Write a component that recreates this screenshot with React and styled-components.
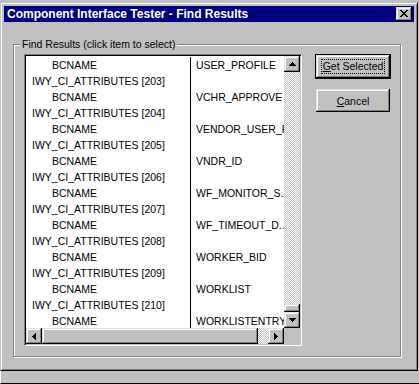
import React from "react";
import styled, { createGlobalStyle } from "styled-components";

const GlobalStyle = createGlobalStyle`
  html, body {
    margin: 0;
    padding: 0;
    background: #c0c0c0;
  }
  body {
    font-family: "Liberation Sans", Arial, sans-serif;
    font-size: 10.5px;
    color: #000;
  }
`;

const raised = `
  box-shadow: inset -1px -1px 0 #000, inset 1px 1px 0 #dfdfdf,
    inset -2px -2px 0 #808080, inset 2px 2px 0 #fff;
`;

const dither = `
  background-color: #c0c0c0;
  background-image: conic-gradient(#c0c0c0 25%, #fff 0 50%, #c0c0c0 0 75%, #fff 0);
  background-size: 2px 2px;
`;

const Screen = styled.div`
  width: 419px;
  height: 384px;
  overflow: hidden;
  background: #c0c0c0;
  padding-top: 2px;
  box-sizing: border-box;
  display: flex;
  flex-direction: column;
`;

const Window = styled.div`
  width: 418px;
  height: 369px;
  box-sizing: border-box;
  border: 1px solid;
  border-color: #c0c0c0 #000 #000 #c0c0c0;
  box-shadow: inset 1px 1px 0 #fff, inset -1px -1px 0 #808080;
  padding: 3px;
  display: flex;
  flex-direction: column;
  flex: none;
`;

const TitleBar = styled.div`
  height: 16px;
  background: #000080;
  display: flex;
  align-items: center;
  justify-content: space-between;
  padding: 0 2px 0 3px;
`;

const Title = styled.span`
  color: #fff;
  font-weight: bold;
  font-size: 12px;
  line-height: 16px;
  white-space: nowrap;
`;

const CloseButton = styled.div`
  width: 16px;
  height: 14px;
  background: #c0c0c0;
  ${raised}
  display: flex;
  align-items: center;
  justify-content: center;
  padding-bottom: 1px;
  box-sizing: border-box;
`;

const Body = styled.div`
  flex: 1;
  display: flex;
  padding: 22px 13px 10px 9px;
`;

const GroupBox = styled.div`
  position: relative;
  width: 388px;
  box-sizing: border-box;
  border: 1px solid #808080;
  box-shadow: inset 1px 1px 0 #fff, 1px 1px 0 #fff;
  padding: 9px 9px 10px 10px;
  display: flex;
  gap: 13px;
`;

const Legend = styled.span`
  position: absolute;
  left: 6px;
  top: -7px;
  padding: 0 2px;
  background: #c0c0c0;
  line-height: 12px;
  white-space: nowrap;
`;

const ListBox = styled.div`
  width: 278px;
  height: 292px;
  box-sizing: border-box;
  border: 1px solid;
  border-color: #808080 #fff #fff #808080;
  box-shadow: inset 1px 1px 0 #000, inset -1px -1px 0 #c0c0c0;
  padding: 1px;
  display: grid;
  grid-template-columns: 1fr 16px;
  grid-template-rows: 1fr 16px;
`;

const Rows = styled.div`
  background: #fff;
  overflow: hidden;
  padding-top: 1px;
`;

const Row = styled.div`
  display: flex;
  height: 16px;
  line-height: 16px;
  white-space: nowrap;
`;

const NameCell = styled.div`
  width: 165px;
  flex: none;
  box-sizing: border-box;
  border-right: 1px solid #000;
  padding-left: ${(p) => (p.$child ? "26px" : "6px")};
  overflow: hidden;
`;

const ValueCell = styled.div`
  flex: none;
  padding-left: 5px;
`;

const VScroll = styled.div`
  display: flex;
  flex-direction: column;
  ${dither}
`;

const HScroll = styled.div`
  display: flex;
  ${dither}
`;

const ArrowButton = styled.div`
  width: 16px;
  height: 16px;
  flex: none;
  background: #c0c0c0;
  ${raised}
  display: flex;
  align-items: center;
  justify-content: center;
`;

const Track = styled.div`
  flex: 1;
`;

const Thumb = styled.div`
  flex: none;
  background: #c0c0c0;
  ${raised}
  width: ${(p) => p.$w || "16px"};
  height: ${(p) => p.$h || "16px"};
`;

const Corner = styled.div`
  background: #c0c0c0;
`;

const ButtonColumn = styled.div`
  width: 76px;
  display: flex;
  flex-direction: column;
  align-items: center;
  gap: 10px;
`;

const PushButton = styled.button`
  width: 74px;
  height: 23px;
  padding: 0;
  border: none;
  background: #c0c0c0;
  font-family: inherit;
  font-size: 10.5px;
  color: #000;
  ${raised}
  display: flex;
  align-items: center;
  justify-content: center;
`;

const DefaultButton = styled.div`
  border: 1px solid #000;
  display: flex;
`;

const FocusLabel = styled.span`
  outline: 1px dotted #000;
  padding: 1px 1px;
  line-height: 11px;
`;

const BottomStrip = styled.div`
  height: 13px;
  box-sizing: border-box;
  border-bottom: 1px solid #000;
  border-left: 1px solid #fff;
`;

const CloseGlyph = () => (
  <svg width="8" height="7" viewBox="0 0 8 7" shapeRendering="crispEdges">
    <path
      d="M0 0h2v1h-2zM6 0h2v1h-2zM1 1h2v1h-2zM5 1h2v1h-2zM2 2h4v1h-4zM3 3h2v1h-2zM2 4h4v1h-4zM1 5h2v1h-2zM5 5h2v1h-2zM0 6h2v1h-2zM6 6h2v1h-2z"
      fill="#000"
    />
  </svg>
);

const Arrow = ({ dir }) => {
  const shapes = {
    up: "M3 0h1v1h-1zM2 1h3v1h-3zM1 2h5v1h-5zM0 3h7v1h-7z",
    down: "M0 0h7v1h-7zM1 1h5v1h-5zM2 2h3v1h-3zM3 3h1v1h-1z",
    left: "M3 0h1v7h-1zM2 1h1v5h-1zM1 2h1v3h-1zM0 3h1v1h-1z",
    right: "M0 0h1v7h-1zM1 1h1v5h-1zM2 2h1v3h-1zM3 3h1v1h-1z",
  };
  const vertical = dir === "up" || dir === "down";
  return (
    <svg
      width={vertical ? 7 : 4}
      height={vertical ? 4 : 7}
      viewBox={vertical ? "0 0 7 4" : "0 0 4 7"}
      shapeRendering="crispEdges"
    >
      <path d={shapes[dir]} fill="#000" />
    </svg>
  );
};

const results = [
  ["USER_PROFILE", 203],
  ["VCHR_APPROVE", 204],
  ["VENDOR_USER_PROFILE", 205],
  ["VNDR_ID", 206],
  ["WF_MONITOR_S...", 207],
  ["WF_TIMEOUT_D...", 208],
  ["WORKER_BID", 209],
  ["WORKLIST", 210],
  ["WORKLISTENTRY", null],
];

export default function App() {
  return (
    <>
      <GlobalStyle />
      <Screen>
        <Window>
          <TitleBar>
            <Title>Component Interface Tester - Find Results</Title>
            <CloseButton>
              <CloseGlyph />
            </CloseButton>
          </TitleBar>
          <Body>
            <GroupBox>
              <Legend>Find Results (click item to select)</Legend>
              <ListBox>
                <Rows>
                  {results.map(([value, n]) => (
                    <React.Fragment key={value}>
                      <Row>
                        <NameCell $child>BCNAME</NameCell>
                        <ValueCell>{value}</ValueCell>
                      </Row>
                      {n && (
                        <Row>
                          <NameCell>IWY_CI_ATTRIBUTES [{n}]</NameCell>
                          <ValueCell />
                        </Row>
                      )}
                    </React.Fragment>
                  ))}
                </Rows>
                <VScroll>
                  <ArrowButton>
                    <Arrow dir="up" />
                  </ArrowButton>
                  <Track />
                  <Thumb $h="8px" />
                  <ArrowButton>
                    <Arrow dir="down" />
                  </ArrowButton>
                </VScroll>
                <HScroll>
                  <ArrowButton>
                    <Arrow dir="left" />
                  </ArrowButton>
                  <Thumb $w="216px" />
                  <Track />
                  <ArrowButton>
                    <Arrow dir="right" />
                  </ArrowButton>
                </HScroll>
                <Corner />
              </ListBox>
              <ButtonColumn>
                <DefaultButton>
                  <PushButton>
                    <FocusLabel>
                      <u>G</u>et Selected
                    </FocusLabel>
                  </PushButton>
                </DefaultButton>
                <PushButton>
                  <span>
                    <u>C</u>ancel
                  </span>
                </PushButton>
              </ButtonColumn>
            </GroupBox>
          </Body>
        </Window>
        <BottomStrip />
      </Screen>
    </>
  );
}
